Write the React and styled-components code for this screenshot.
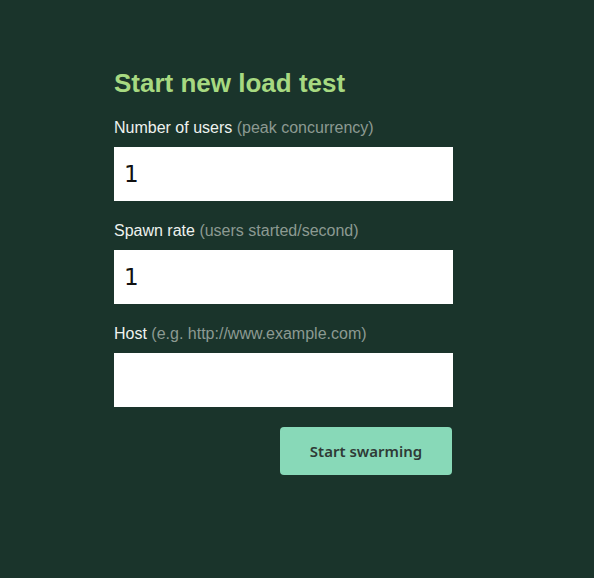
import React from "react";
import styled, { createGlobalStyle } from "styled-components";

const GlobalStyle = createGlobalStyle`
  html, body {
    margin: 0;
    padding: 0;
    background-color: #1a342b;
  }
  body {
    font-family: "Liberation Sans", Arial, sans-serif;
  }
`;

const Page = styled.div`
  min-height: 578px;
  padding: 69px 0 0 114px;
  box-sizing: border-box;
`;

const Form = styled.form`
  width: 339px;
  display: flex;
  flex-direction: column;
`;

const Title = styled.h2`
  margin: 0 0 21px;
  font-size: 26px;
  line-height: 28px;
  font-weight: bold;
  color: #a7d981;
`;

const Field = styled.div`
  display: flex;
  flex-direction: column;
  margin-bottom: 20px;
`;

const Label = styled.label`
  font-size: 16px;
  line-height: 20px;
  color: #eef2ef;
  margin-bottom: 9px;
`;

const Hint = styled.span`
  color: #8c9a92;
`;

const Input = styled.input`
  height: 54px;
  box-sizing: border-box;
  border: none;
  outline: none;
  background: #ffffff;
  padding: 0 10px;
  font-family: "DejaVu Sans", sans-serif;
  font-size: 23px;
  color: #111;
`;

const Actions = styled.div`
  display: flex;
  justify-content: flex-end;
  padding-right: 1px;
`;

const Button = styled.button`
  width: 172px;
  height: 48px;
  border: none;
  border-radius: 4px;
  background-color: #88d9b8;
  color: #2f3b36;
  font-family: "Noto Sans", "Open Sans", sans-serif;
  font-weight: 600;
  font-size: 15px;
  cursor: pointer;
`;

const fields = [
  { label: "Number of users", hint: "(peak concurrency)", value: "1" },
  { label: "Spawn rate", hint: "(users started/second)", value: "1" },
  { label: "Host", hint: "(e.g. http://www.example.com)", value: "" },
];

const App = () => {
  return (
    <>
      <GlobalStyle />
      <Page>
        <Form onSubmit={(e) => e.preventDefault()}>
          <Title>Start new load test</Title>
          {fields.map((f) => (
            <Field key={f.label}>
              <Label>
                {f.label} <Hint>{f.hint}</Hint>
              </Label>
              <Input defaultValue={f.value} />
            </Field>
          ))}
          <Actions>
            <Button type="submit">Start swarming</Button>
          </Actions>
        </Form>
      </Page>
    </>
  );
};

export default App;
